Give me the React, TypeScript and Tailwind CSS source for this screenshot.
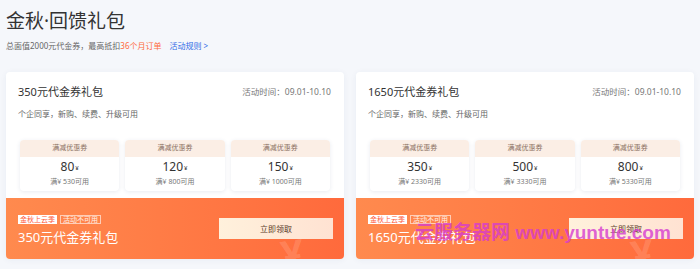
const coupons = {
  a: [
    { amount: "80", min: "530" },
    { amount: "120", min: "800" },
    { amount: "150", min: "1000" },
  ],
  b: [
    { amount: "350", min: "2330" },
    { amount: "500", min: "3330" },
    { amount: "800", min: "5330" },
  ],
};

const font = { fontFamily: '"Noto Sans", "Noto Sans CJK SC", sans-serif' };

const Coupon = ({ amount, min }: { amount: string; min: string }) => (
  <div className="flex-1 bg-white rounded-sm shadow-[0_1px_4px_rgba(40,60,120,0.1)] overflow-hidden pb-[3px]">
    <div className="h-[17px] bg-[#fbeee5] text-[7px] text-[#8a6e60] flex items-center justify-center">
      满减优惠券
    </div>
    <div className="h-[19px] flex items-center justify-center text-[12px] leading-none text-[#333]">
      {amount}
      <span className="text-[6px] ml-[1px] mt-[3px]">¥</span>
    </div>
    <div className="h-[12px] flex items-center justify-center text-[7px] text-[#777]">
      满¥ {min}可用
    </div>
  </div>
);

const Card = ({
  title,
  items,
  watermark,
}: {
  title: string;
  items: { amount: string; min: string }[];
  watermark?: boolean;
}) => (
  <div className="relative flex-1 bg-white rounded-sm shadow-[0_1px_6px_rgba(40,60,120,0.06)] overflow-hidden">
    <div className="pt-[13px]">
      <div className="flex items-center justify-between h-[14px] pl-[12px] pr-[13px]">
        <span className="text-[11px] text-[#333]">{title}</span>
        <span className="text-[8.5px] text-[#777]">活动时间：09.01-10.10</span>
      </div>
      <div className="mt-[10px] h-[10px] flex items-center pl-[12px] text-[8px] text-[#666]">
        个企同享，新购、续费、升级可用
      </div>
      <div className="mt-[21px] flex gap-[6px] px-[14px]">
        {items.map((c) => (
          <Coupon key={c.amount} {...c} />
        ))}
      </div>
    </div>
    <div className="relative mt-[7px] h-[61px] bg-gradient-to-r from-[#ff8a4e] to-[#ff6a3c] pl-[12px] pr-[11px] flex items-center justify-between overflow-hidden">
      <span className="absolute right-[40px] top-[36px] text-[40px] font-bold text-white/15 leading-none rotate-[-8deg]">
        ¥
      </span>
      <div className="flex flex-col pt-[4px]">
        <div className="flex gap-[3px]">
          <span className="h-[9px] flex items-center text-[7px] leading-none px-[2px] bg-white text-[#ff5a3a]">金秋上云季</span>
          <span className="h-[9px] flex items-center text-[7px] leading-none px-[2px] border border-white/60 text-white/90">活动不可用</span>
        </div>
        <span className="mt-[6px] h-[16px] flex items-center text-[13px] text-white">{title}</span>
      </div>
      <button className="relative w-[114px] h-[21px] bg-gradient-to-r from-[#fff1dc] to-[#ffe2d2] text-[8px] text-[#5a3b2a]">
        立即领取
      </button>
    </div>
    {watermark && (
      <span
        className="absolute left-[59px] top-[149px] text-[19px] font-bold text-[#d53bd0]/80 whitespace-nowrap leading-[24px]"
        style={{ fontFamily: '"Liberation Sans", "Noto Sans CJK SC", sans-serif' }}
      >
        云服务器网 www.yuntue.com
      </span>
    )}
  </div>
);

export default function App() {
  return (
    <div className="w-[700px] h-[269px] bg-[#f5f7fb] px-[6px] pt-[6px]" style={font}>
      <h1 className="h-[30px] flex items-center text-[19px] text-[#333]">金秋·回馈礼包</h1>
      <p className="mt-[4px] h-[12px] flex items-center text-[8px] text-[#666]">
        总面值2000元代金券，最高抵扣<span className="text-[#ff6a3d]">36个月订单</span>
        <span className="ml-[8px] text-[#2e6be6]">活动规则 &gt;</span>
      </p>
      <div className="mt-[20px] flex gap-[12px]">
        <Card title="350元代金券礼包" items={coupons.a} />
        <Card title="1650元代金券礼包" items={coupons.b} watermark />
      </div>
    </div>
  );
}
